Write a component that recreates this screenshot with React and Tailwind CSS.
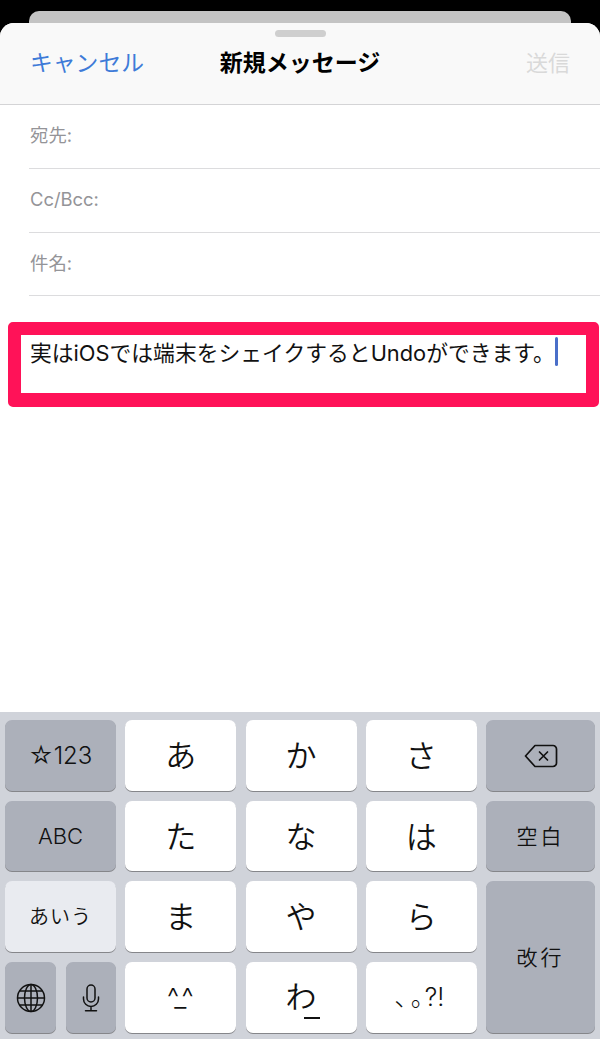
const font = { fontFamily: 'Inter, "Noto Sans CJK JP", sans-serif' };

function Key({ children, kind = "white", className = "" }) {
  const tone =
    kind === "white"
      ? "bg-white"
      : kind === "light"
        ? "bg-[#e9ebf0]"
        : "bg-[#acb0ba]";
  return (
    <div
      className={`flex items-center justify-center rounded-[7px] text-[#111] shadow-[0_1px_0_#85868a] ${tone} ${className}`}
    >
      {children}
    </div>
  );
}

function Kana({ children }) {
  return <span className="text-[31px] font-[350] leading-none">{children}</span>;
}

function Field({ label, className = "h-[64px]" }) {
  return (
    <div className={`ml-[29px] flex shrink-0 items-start border-b border-[#dcdcde] pl-px pt-[18px] text-[18.4px] leading-[24px] text-[#949498] ${className}`}>
      {label}
    </div>
  );
}

function DeleteIcon() {
  return (
    <svg width="34" height="24" viewBox="0 0 34 24" fill="none" stroke="#111" strokeWidth="1.7" strokeLinejoin="round" strokeLinecap="round">
      <path d="M11 1.5H29a3.5 3.5 0 0 1 3.5 3.5V19a3.5 3.5 0 0 1-3.5 3.5H11L1.5 12Z" />
      <path d="M15.5 8l8 8M23.5 8l-8 8" />
    </svg>
  );
}

function GlobeIcon() {
  return (
    <svg width="30" height="30" viewBox="0 0 30 30" fill="none" stroke="#111" strokeWidth="1.5">
      <circle cx="15" cy="15" r="13.5" />
      <ellipse cx="15" cy="15" rx="6.5" ry="13.5" />
      <path d="M15 1.5v27M1.5 15h27M3.6 8h22.8M3.6 22h22.8" />
    </svg>
  );
}

function MicIcon() {
  return (
    <svg width="18" height="28" viewBox="0 0 18 28" fill="none" stroke="#111" strokeWidth="1.5" strokeLinecap="round">
      <rect x="5" y="1" width="8" height="17" rx="4" />
      <path d="M1.5 13v2a7.5 7.5 0 0 0 15 0v-2M9 22.5V26.5M3.5 26.8h11" />
    </svg>
  );
}

export default function App() {
  return (
    <div className="flex h-[1039px] w-[600px] flex-col overflow-hidden bg-black" style={font}>
      <div className="mx-[29px] mt-[11px] h-[12px] shrink-0 rounded-t-[10px] bg-[#c4c4c4]" />

      <div className="flex min-h-0 flex-1 flex-col overflow-hidden rounded-t-[14px] bg-white">
        <header className="flex h-[82px] shrink-0 flex-col border-b border-[#d4d4d6] bg-[#f9f9f9]">
          <div className="mx-auto mt-[7px] h-[7px] w-[51px] rounded-full bg-[#cfcfcf]" />
          <div className="mt-[10px] grid grid-cols-[1fr_auto_1fr] items-center px-[30px]">
            <span className="text-[22.8px] leading-[32px] text-[#3e7bd8]">キャンセル</span>
            <span className="text-[23px] font-bold leading-[32px] text-black">新規メッセージ</span>
            <span className="justify-self-end text-[22px] leading-[32px] text-[#d9d9d9]">送信</span>
          </div>
        </header>

        <Field label="宛先:" />
        <Field label="Cc/Bcc:" />
        <Field label="件名:" className="h-[63px]" />

        <div className="ml-[8px] mt-[26px] h-[85px] w-[591px] shrink-0 rounded-[5px] border-x-[13px] border-b-[14px] border-t-[13px] border-[#ff1258] bg-white">
          <div className="flex items-start pl-[9px]">
            <span className="mt-[4px] whitespace-nowrap text-[21.8px] leading-[28px] text-[#111]">
              実はiOSでは端末をシェイクするとUndoができます。
            </span>
            <span className="ml-auto mr-[28px] mt-[2px] h-[29px] w-[3px] rounded-full bg-[#4a6fc9]" />
          </div>
        </div>

        <div className="flex-1" />

        <div className="grid shrink-0 grid-cols-[111px_111px_111px_111px_109px] grid-rows-[71px_70px_71px_71px] gap-x-[9.25px] gap-y-[10px] bg-[#d0d3da] pb-[6px] pl-[5px] pr-[5px] pt-[8px]">
          <Key kind="gray">
            <span className="text-[24px] font-light leading-none">☆123</span>
          </Key>
          <Key><Kana>あ</Kana></Key>
          <Key><Kana>か</Kana></Key>
          <Key><Kana>さ</Kana></Key>
          <Key kind="gray"><DeleteIcon /></Key>

          <Key kind="gray">
            <span className="text-[22px] font-light leading-none">ABC</span>
          </Key>
          <Key><Kana>た</Kana></Key>
          <Key><Kana>な</Kana></Key>
          <Key><Kana>は</Kana></Key>
          <Key kind="gray">
            <span className="text-[21px] font-[350] leading-none tracking-[3px]">空白</span>
          </Key>

          <Key kind="light">
            <span className="text-[20px] font-[350] leading-none tracking-[1px]">あいう</span>
          </Key>
          <Key><Kana>ま</Kana></Key>
          <Key><Kana>や</Kana></Key>
          <Key><Kana>ら</Kana></Key>
          <Key kind="gray" className="row-span-2">
            <span className="text-[21px] font-[350] leading-none tracking-[3px]">改行</span>
          </Key>

          <div className="grid grid-cols-[51px_50px] gap-x-[10px]">
            <Key kind="gray"><GlobeIcon /></Key>
            <Key kind="gray"><MicIcon /></Key>
          </div>
          <Key>
            <span className="pr-[4px] text-[27px] font-light leading-none tracking-[-3px]">^_^</span>
          </Key>
          <Key>
            <span className="relative">
              <Kana>わ</Kana>
              <span className="absolute left-[18px] top-[36px] h-[1.5px] w-[16px] bg-[#111]" />
            </span>
          </Key>
          <Key>
            <span className="pr-[4px] text-[25px] font-light leading-none">
              <span className="tracking-[4px]">、</span>
              <span className="tracking-[-11px]">。</span>?!
            </span>
          </Key>
        </div>
      </div>
    </div>
  );
}
